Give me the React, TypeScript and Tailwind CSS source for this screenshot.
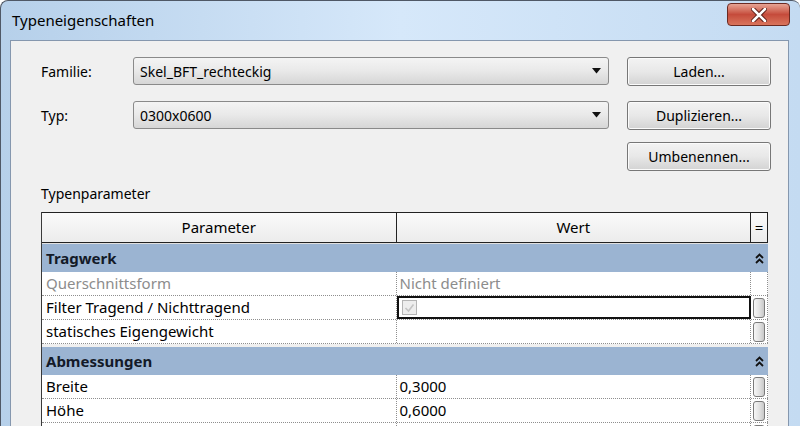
import React from 'react';

const font = { fontFamily: '"Noto Sans", "Open Sans", sans-serif' };

function ComboBox({ value }: { value: string }) {
  return (
    <div className="w-[476px] h-[28px] flex items-center justify-between rounded-[3px] border border-[#8a8a8a] bg-gradient-to-b from-[#f4f4f4] via-[#e9e9e9] to-[#d6d6d6] pl-[6px] pr-[7px] text-[14px] text-black">
      <span>{value}</span>
      <svg width="9" height="6" viewBox="0 0 9 6">
        <path d="M0 0 H9 L4.5 5.5 Z" fill="#111" />
      </svg>
    </div>
  );
}

function Button({ label }: { label: string }) {
  return (
    <div className="w-[144px] h-[29px] flex items-center justify-center rounded-[3px] border border-[#777] bg-gradient-to-b from-[#f3f3f3] via-[#e8e8e8] to-[#d3d3d3] text-[14px] text-black shadow-[inset_0_0_0_1px_#fbfbfb]">
      {label}
    </div>
  );
}

function Chevrons() {
  return (
    <svg width="9" height="11" viewBox="0 0 9 11">
      <path d="M1 5 L4.5 1.5 L8 5" stroke="#111" strokeWidth="1.8" fill="none" />
      <path d="M1 10 L4.5 6.5 L8 10" stroke="#111" strokeWidth="1.8" fill="none" />
    </svg>
  );
}

function SideButton() {
  return (
    <div className="w-[12px] h-[20px] rounded-[3px] border border-[#7a7a7a] bg-gradient-to-r from-[#f6f6f6] via-[#e4e4e4] to-[#c8c8c8]" />
  );
}

function GroupRow({ label }: { label: string }) {
  return (
    <div className="flex h-[28px] bg-[#9bb4d2] items-center">
      <div className="w-[710px] pl-[4px] text-[15px] font-bold text-[#131a28]">{label}</div>
      <div className="w-[17px] flex justify-center">
        <Chevrons />
      </div>
    </div>
  );
}

function DataRow({
  name,
  value,
  muted,
  selected,
  check,
  button = true,
}: {
  name: string;
  value?: string;
  muted?: boolean;
  selected?: boolean;
  check?: boolean;
  button?: boolean;
}) {
  const textColor = muted ? 'text-[#8c8c8c]' : 'text-black';
  return (
    <div className="flex h-[24px] bg-white border-b border-dotted border-[#8e8e8e] text-[15px]">
      <div className={`w-[355px] pl-[4px] flex items-center border-r border-dotted border-[#8e8e8e] ${textColor}`}>
        {name}
      </div>
      <div
        className={`w-[355px] flex items-center pl-[3px] ${textColor} ${
          selected ? 'border-2 border-[#111]' : 'border-r border-dotted border-[#8e8e8e]'
        }`}
      >
        {check ? (
          <div className="w-[15px] h-[15px] border border-[#b5b5b5] bg-[#eeeeee] flex items-center justify-center">
            <svg width="11" height="10" viewBox="0 0 11 10">
              <path d="M1.5 5 L4.5 8 L9.5 1.5" stroke="#c4c4c4" strokeWidth="1.6" fill="none" />
            </svg>
          </div>
        ) : (
          value
        )}
      </div>
      <div className="w-[17px] flex items-center justify-center border-r border-dotted border-[#8e8e8e]">
        {button && <SideButton />}
      </div>
    </div>
  );
}

export default function App() {
  return (
    <div className="w-[800px] h-[426px] overflow-hidden bg-white" style={font}>
      <div className="w-[800px] h-[426px] flex flex-col rounded-tl-[8px] rounded-tr-[8px] border-l border-t border-[#4f5866] bg-gradient-to-r from-[#b6d0ea] via-[#d6e8fa] to-[#c4dbf2]">
        {/* Title bar */}
        <div className="h-[39px] shrink-0 flex justify-between">
          <div className="pl-[11px] pt-[8px] text-[15px] text-black">Typeneigenschaften</div>
          <div className="mt-[2px] mr-[10px] w-[63px] h-[23px] rounded-[4px] border border-[#6b2a22] bg-gradient-to-b from-[#e6a394] via-[#c54b3b] to-[#d9745c] flex items-center justify-center">
            <svg width="16" height="14" viewBox="0 0 16 14">
              <path d="M2 1 L14 13 M14 1 L2 13" stroke="#5a1d16" strokeWidth="4.5" strokeLinecap="round" />
              <path d="M2 1 L14 13 M14 1 L2 13" stroke="#ffffff" strokeWidth="2.6" strokeLinecap="round" />
            </svg>
          </div>
        </div>

        {/* Body */}
        <div className="flex-1 min-h-0 overflow-hidden flex pl-[9px] pr-[11px]">
          <div className="flex-1 border-l border-t border-r border-[#8597ae] bg-[#f0f0f0] pt-[15px] pl-[30px]">
            <div className="flex items-center h-[30px]">
              <div className="w-[92px] text-[14px] text-black">Familie:</div>
              <ComboBox value="Skel_BFT_rechteckig" />
              <div className="ml-[18px]">
                <Button label="Laden..." />
              </div>
            </div>
            <div className="flex items-center h-[30px] mt-[14px]">
              <div className="w-[92px] text-[14px] text-black">Typ:</div>
              <ComboBox value="0300x0600" />
              <div className="ml-[18px]">
                <Button label="Duplizieren..." />
              </div>
            </div>
            <div className="flex mt-[12px] pl-[586px]">
              <Button label="Umbenennen..." />
            </div>
            <div className="mt-[12px] h-[18px] text-[14px] text-black">Typenparameter</div>

            {/* Table */}
            <div className="mt-[11px] w-[727px] border-l border-[#3a3a3a]">
              <div className="flex h-[31px] border-t border-b border-[#222] bg-gradient-to-b from-[#fafafa] to-[#ececec] text-[15px] text-black">
                <div className="w-[355px] flex items-center justify-center border-r border-[#222]">Parameter</div>
                <div className="w-[355px] flex items-center justify-center border-r border-[#222]">Wert</div>
                <div className="w-[17px] flex items-center justify-center border-r border-[#222]">=</div>
              </div>
              <div className="h-[1px] bg-[#e0e0e0]" />
              <GroupRow label="Tragwerk" />
              <DataRow name="Querschnittsform" value="Nicht definiert" muted button={false} />
              <DataRow name="Filter Tragend / Nichttragend" selected check />
              <DataRow name="statisches Eigengewicht" value="" />
              <div className="h-[3px] bg-[#f0f0f0]" />
              <GroupRow label="Abmessungen" />
              <DataRow name="Breite" value="0,3000" />
              <DataRow name="Höhe" value="0,6000" />
              <DataRow name="" value="" />
            </div>
          </div>
        </div>
      </div>
    </div>
  );
}
